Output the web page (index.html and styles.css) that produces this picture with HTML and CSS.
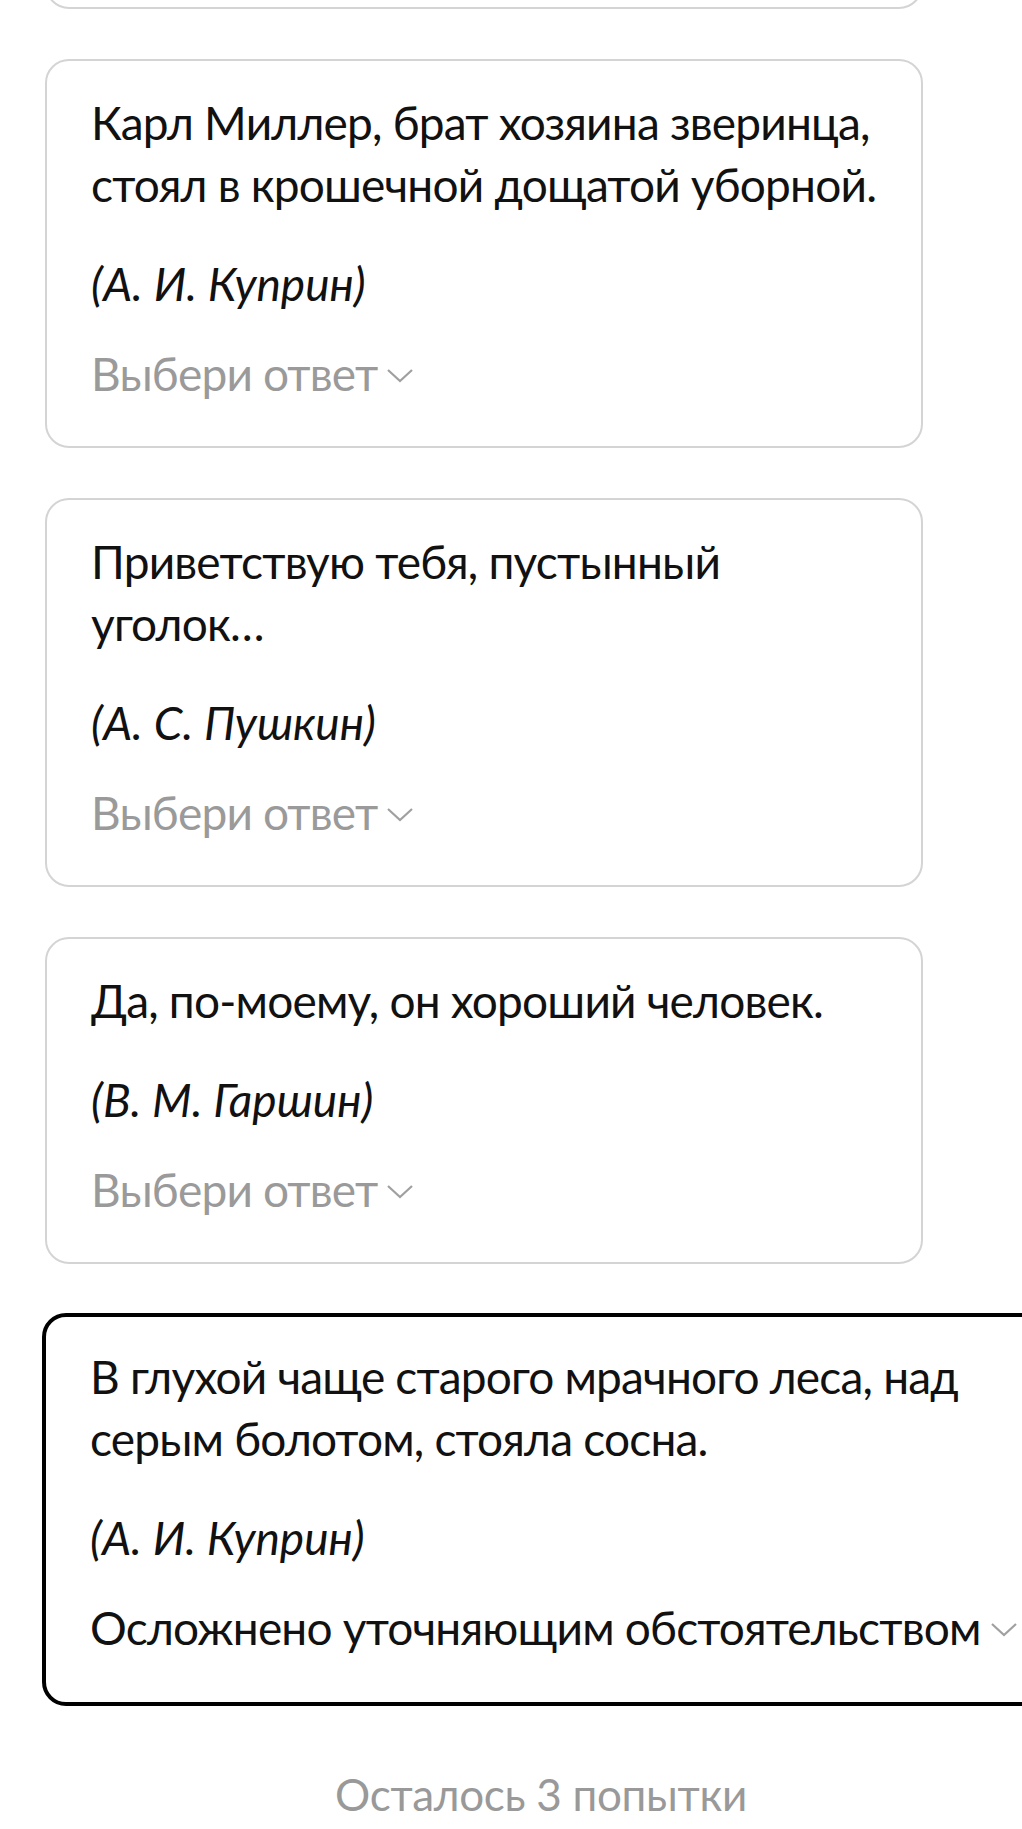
FILE: index.html
```html
<!DOCTYPE html>
<html lang="ru">
<head>
  <meta charset="UTF-8">
  <meta name="viewport" content="width=device-width, initial-scale=1.0">
  <title>Осложнённые предложения</title>
  <link rel="stylesheet" href="styles.css">
</head>
<body>
  <div class="task-list">
    <div class="task-card task-card-tail"></div>

    <div class="task-card">
      <p class="task-text">Карл Миллер, брат хозяина зверинца, стоял в крошечной дощатой уборной.</p>
      <p class="task-author">(А. И. Куприн)</p>
      <div class="task-select">
        <span>Выбери ответ</span>
        <svg class="chevron" viewBox="0 0 26 14" width="26" height="14"><path d="M1 1 L13 12 L25 1" /></svg>
      </div>
    </div>

    <div class="task-card">
      <p class="task-text">Приветствую тебя, пустынный уголок…</p>
      <p class="task-author">(А. С. Пушкин)</p>
      <div class="task-select">
        <span>Выбери ответ</span>
        <svg class="chevron" viewBox="0 0 26 14" width="26" height="14"><path d="M1 1 L13 12 L25 1" /></svg>
      </div>
    </div>

    <div class="task-card">
      <p class="task-text">Да, по-моему, он хороший человек.</p>
      <p class="task-author">(В. М. Гаршин)</p>
      <div class="task-select">
        <span>Выбери ответ</span>
        <svg class="chevron" viewBox="0 0 26 14" width="26" height="14"><path d="M1 1 L13 12 L25 1" /></svg>
      </div>
    </div>

    <div class="task-card task-card-active">
      <p class="task-text">В глухой чаще старого мрачного леса, над серым болотом, стояла сосна.</p>
      <p class="task-author">(А. И. Куприн)</p>
      <div class="task-select task-select-filled">
        <span>Осложнено уточняющим обстоятельством</span>
        <svg class="chevron" viewBox="0 0 26 14" width="26" height="14"><path d="M1 1 L13 12 L25 1" /></svg>
      </div>
    </div>
  </div>

  <div class="attempts">Осталось 3 попытки</div>
</body>
</html>
```

FILE: styles.css
```css
html, body {
  margin: 0;
  padding: 0;
  background: #fff;
  overflow: hidden;
}

body {
  font-family: Lato, "Noto Sans", sans-serif;
  color: #111;
}

.task-list {
  display: flex;
  flex-direction: column;
  align-items: flex-start;
  gap: 50px;
  padding-left: 45px;
}

.task-card {
  box-sizing: border-box;
  width: 878px;
  border: 2px solid #d4d4d4;
  border-radius: 24px;
  padding: 31px 30px 41px 44px;
  font-size: 46px;
  line-height: 62px;
  letter-spacing: -0.8px;
}

.task-card-tail {
  height: 60px;
  padding: 0;
  margin-top: -51px;
}

.task-card-active {
  width: max-content;
  margin-left: -3px;
  margin-top: -1px;
  border: 4.5px solid #000;
  padding: 29px 44px 43px 44px;
}

.task-card-active .task-text {
  max-width: 880px;
}

.task-text {
  margin: 0;
}

.task-author {
  margin: 37px 0 0;
  font-style: italic;
  letter-spacing: 0;
}

.task-select {
  margin-top: 28px;
  display: flex;
  align-items: center;
  gap: 10px;
  color: #9a9a9a;
  white-space: nowrap;
}

.task-select-filled {
  color: #111;
}

.chevron {
  margin-top: 4px;
  flex-shrink: 0;
}

.chevron path {
  fill: none;
  stroke: #a0a0a0;
  stroke-width: 2.2;
}

.attempts {
  margin-top: 61px;
  padding-left: 60px;
  text-align: center;
  font-size: 44px;
  line-height: 54px;
  letter-spacing: -0.3px;
  color: #999;
}
```
